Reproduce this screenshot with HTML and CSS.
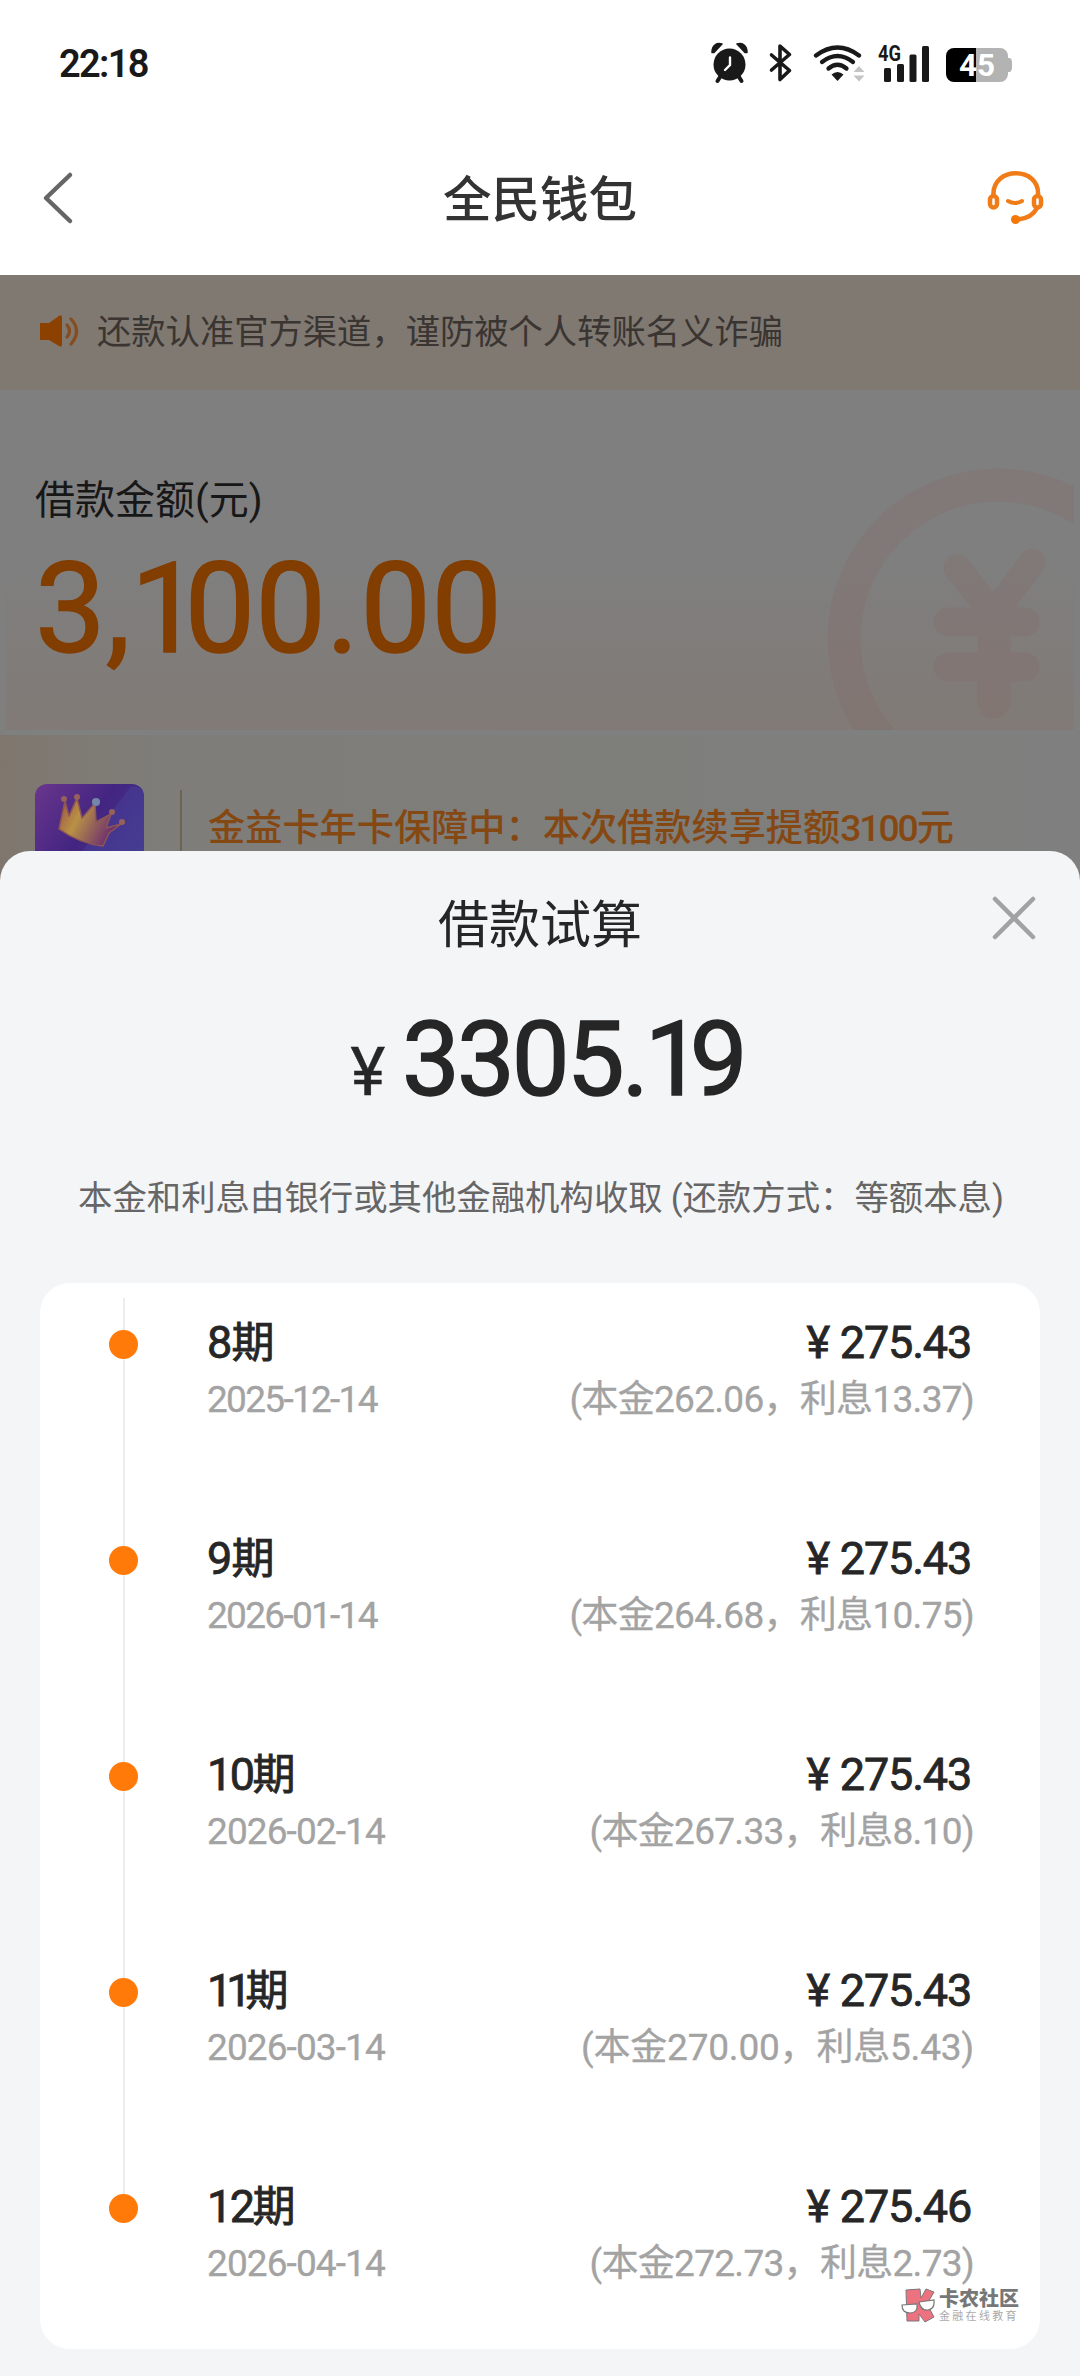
FILE: index.html
```html
<!DOCTYPE html>
<html lang="zh-CN">
<head>
<meta charset="utf-8">
<title>全民钱包</title>
<link rel="stylesheet" href="styles.css">
</head>
<body>
<div class="screen">
  <header class="status">
    <span class="clock">22:18</span>
    <svg class="status-icons" viewBox="0 0 310 44" width="310" height="44">
      <g fill="#191919">
        <circle cx="18.500" cy="24.500" r="16"/>
        <path d="M1 12.500C1 5 6 2.500 11 4L3 12.500ZM36 12.500C36 5 31 2.500 26 4L34 12.500Z" stroke="#191919" stroke-width="1.500" stroke-linejoin="round"/>
        <path d="M9 37l-2.500 4M28 37l2.500 4" stroke="#191919" stroke-width="4" stroke-linecap="round"/>
        <path d="M19 17.500v7.500l-5 5" fill="none" stroke="#fff" stroke-width="2.400" stroke-linecap="round"/>
      </g>
      <path d="M60.500 15l18 15.500-9.500 9V6l9.500 8.500-18 15.500" fill="none" stroke="#191919" stroke-width="3.600" stroke-linejoin="round" stroke-linecap="round"/>
      <g fill="none" stroke="#191919" stroke-width="4.300" stroke-linecap="round">
        <path d="M105 15.500q21.500-16 43 0"/><path d="M111 22q15.500-12 31 0"/><path d="M117.500 28.500q9-7.500 18 0"/>
      </g>
      <path d="M120.500 34.500q6-5 12 0l-6 6.500z" fill="#191919"/>
      <path d="M142.500 32l5.500-6 5.500 6zM142.500 35.500l5.500 6 5.500-6z" fill="#c4c4c4"/>
      <g fill="#191919"><rect x="173" y="28" width="7" height="14" rx="1.500"/><rect x="186" y="24" width="7" height="18" rx="1.500"/><rect x="198.500" y="14.500" width="7" height="27.500" rx="1.500"/><rect x="211" y="6" width="7" height="36" rx="1.500"/></g>
      <text x="167" y="21" class="net" textLength="23" lengthAdjust="spacingAndGlyphs">4G</text>
      <path d="M265 8h24a8 8 0 0 1 8 8v2h2q2 1 2 5v4q0 4-2 5h-2v2a8 8 0 0 1-8 8h-24z" fill="#b3b3b3"/>
      <path d="M265 8h-22a8 8 0 0 0-8 8v18a8 8 0 0 0 8 8h22z"/>
      <text x="248" y="36" class="batt" textLength="36" lengthAdjust="spacingAndGlyphs">45</text>
    </svg>
  </header>
  <nav class="nav">
    <svg width="32" height="54" viewBox="0 0 32 54"><path d="M28 4L4 27l24 23" fill="none" stroke="#666" stroke-width="4.500" stroke-linecap="round" stroke-linejoin="round"/></svg>
    <h1>全民钱包</h1>
    <svg width="58" height="56" viewBox="0 0 58 56"><g fill="none" stroke="#f07c18" stroke-width="4.500" stroke-linecap="round"><path d="M7.500 25C6 -4 54-4 52 25"/><rect x="4" y="26" width="7" height="11.500" rx="3.500"/><rect x="48" y="26" width="7" height="11.500" rx="3.500"/><path d="M51 38q-5 10-19 11.500"/><path d="M22 31q7 4 14 0" stroke-width="4"/></g><circle cx="29.500" cy="49.500" r="4.500" fill="#f47708"/></svg>
  </nav>

  <main class="page">
    <div class="notice">
      <svg width="40" height="34" viewBox="0 0 40 34"><path d="M2 9h8L20 2q3-2 3 2v26q0 4-3 2L10 26H2q-1 0-1-1V10q0-1 1-1z" fill="#8d4100"/><g fill="none" stroke="#864c1e" stroke-width="3.200" stroke-linecap="round"><path d="M28 11q5 6 0 12"/><path d="M32 5q11 12 0 25"/></g></svg>
      <span>还款认准官方渠道，谨防被个人转账名义诈骗</span>
    </div>
    <section class="loan">
      <svg class="coin" width="254" height="264" viewBox="0 0 254 264"><g fill="none" stroke="#846a67" stroke-linecap="round"><circle cx="178" cy="173" r="154" stroke-width="33"/><path d="M137 102l37 46 38-52" stroke-width="27"/><path d="M128 156h77M128 201h77" stroke-width="29"/><path d="M174 156v80" stroke-width="33"/></g></svg>
      <h2>借款金额(元)</h2>
      <div class="sum">3,<i class="one">1</i>00<i class="pt">.</i>00</div>
    </section>
    <section class="member">
      <svg width="110" height="90" viewBox="0 0 110 90"><defs><linearGradient id="tile" x2="1" y2=".7"><stop stop-color="#6a368c"/><stop offset=".5" stop-color="#432581"/><stop offset="1" stop-color="#403a89"/></linearGradient><linearGradient id="gold" x2="1" y2=".4"><stop stop-color="#9a4f45"/><stop offset=".4" stop-color="#b99145"/><stop offset="1" stop-color="#6a2b70"/></linearGradient></defs><rect width="109" height="110" rx="12" fill="url(#tile)"/><path d="M30 90L96 2q13 0 13 12v76z" fill="#4c45a0" opacity=".4"/><path d="M24 45L30 17l4 15 8-18 5 20 13-15 1 19 15-8-5 14 15-4-12 9-6 13Q45 60 24 45z" fill="url(#gold)" stroke="#8c5556" stroke-width="1.500" stroke-linejoin="round"/><g fill="#96605b"><circle cx="29" cy="15" r="3"/><circle cx="42" cy="13" r="3"/><circle cx="61" cy="18" r="4" fill="#7587a8"/><circle cx="77" cy="28" r="3"/><circle cx="87" cy="38" r="3"/></g></svg>
      <span class="rule"></span>
      <p>金益卡年卡保障中：本次借款续享提额<b>3100</b>元</p>
    </section>
  </main>

  <section class="sheet">
    <div class="sheet-head"><h2>借款试算</h2>
      <svg class="close" width="44" height="44" viewBox="0 0 44 44"><path d="M3 3l38 38M41 3L3 41" stroke="#a1a2a3" stroke-width="4.500" stroke-linecap="round"/></svg>
    </div>
    <div class="total"><small>¥</small><span>3305<i class="pt">.</i><i class="one">1</i>9</span></div>
    <p class="desc">本金和利息由银行或其他金融机构收取<span class="open">(</span>还款方式：等额本息)</p>
    <ol class="plan">
      <li><i class="dot"></i><div class="term"><h3>8<em>期</em></h3><time class="narrow">2025-12-14</time></div><div class="pay"><strong>¥ 275.43</strong><span>(本金262.06，利息13.37)</span></div></li>
      <li><i class="dot"></i><div class="term"><h3>9<em>期</em></h3><time class="narrow">2026-01-14</time></div><div class="pay"><strong>¥ 275.43</strong><span>(本金264.68，利息10.75)</span></div></li>
      <li><i class="dot"></i><div class="term"><h3 class="snug">10<em>期</em></h3><time>2026-02-14</time></div><div class="pay"><strong>¥ 275.43</strong><span>(本金267.33，利息8.10)</span></div></li>
      <li><i class="dot"></i><div class="term"><h3 class="tight">11<em>期</em></h3><time>2026-03-14</time></div><div class="pay"><strong>¥ 275.43</strong><span class="wide">(本金270.00，利息5.43)</span></div></li>
      <li><i class="dot"></i><div class="term"><h3 class="snug">12<em>期</em></h3><time>2026-04-14</time></div><div class="pay"><strong>¥ 275.46</strong><span>(本金272.73，利息2.73)</span></div></li>
    </ol>
  </section>

  <div class="mark">
    <svg width="34" height="36" viewBox="0 0 34 36"><path d="M5 2l14-1 1 9 5-9 8 3-7 12 7 13-9 5-6-8v7H6z" fill="#ed7280" stroke="#7d7779"/><g fill="#fff" stroke="#777" stroke-width="1.200"><path d="M1 17l15-1q1 9-7 9T1 17zM18 14l15-2q1 9-6 10t-9-8z"/></g></svg>
    <div><b>卡农社区</b><span>金融在线教育</span></div>
  </div>
</div>
</body>
</html>
```
FILE: styles.css
```css
* { box-sizing: border-box; margin: 0; padding: 0; }
body { background: #fff; font-family: Roboto, "Noto Sans CJK SC", sans-serif; color: #262626; }
i, em { font-style: normal; }
svg { display: block; flex: none; }
h1, h2, h3 { font-weight: 400; }

.screen { position: relative; width: 1080px; height: 2376px; overflow: hidden; display: flex; flex-direction: column; }

.status { height: 120px; padding: 40px 59px 0; display: flex; justify-content: space-between; }
.clock { font-size: 38px; line-height: 48px; font-weight: 600; color: #191919; letter-spacing: -1.700px; }
.net { font: 700 22px Roboto, sans-serif; fill: #191919; }
.batt { font: 700 31px Roboto, sans-serif; fill: #fff; }

.nav { height: 155px; padding: 1px 36px 0 42px; display: flex; align-items: center; justify-content: space-between; }
.nav h1 { font-size: 48.500px; line-height: 60px; font-weight: 500; color: #333; padding: 5px 0 0 20px; }

.page { height: 606px; flex: none; background: #7f7f7f; }
.notice { height: 115px; background: #7f7972; padding: 0 0 4px 39px; display: flex; align-items: center; gap: 18px; font-size: 34.300px; color: #3b3532; }
.notice span { padding-bottom: 4px; }
.loan { position: relative; height: 345px; margin: 0 6px; padding: 86px 0 0 29px; background: linear-gradient(#7f7f7f 50%, #817a76); border-bottom: 5px solid #7f8080; overflow: hidden; }
.loan h2 { font-size: 40px; line-height: 50px; color: #171717; }
.coin { position: absolute; right: 0; top: 76px; opacity: .28; }
.sum { font-size: 126px; line-height: 126px; color: #823d00; -webkit-text-stroke: 1.500px #823d00; margin-top: 20px; }
.sum .one { letter-spacing: -17px; }
.sum .pt { letter-spacing: 1px; }
.member { height: 146px; padding: 49px 0 0 35px; display: flex; align-items: flex-start; background: linear-gradient(90deg, #7f776e, #7e7d79 15%, #7e7e7b 60%, #7f7f7f); }
.rule { width: 2px; height: 80px; margin: 6px 26px 0 35px; background: #6e6254; }
.member p { font-size: 37.200px; line-height: 48px; margin-top: 20px; color: #864813; font-weight: 500; white-space: nowrap; }
.member b { font-weight: 500; letter-spacing: -2px; }

.sheet { position: relative; flex: 1; margin-top: -30px; background: #f4f5f7; border-radius: 30px 30px 0 0; padding: 0 40px; }
.sheet-head { position: relative; height: 145px; text-align: center; }
.sheet-head h2 { font-size: 51px; line-height: 150px; height: 145px; }
.close { position: absolute; right: 4px; top: 45px; }
.total { height: 126px; display: flex; justify-content: center; align-items: baseline; gap: 20px; padding-left: 15px; font-size: 103px; line-height: 128px; letter-spacing: -3px; -webkit-text-stroke: 1.500px #262626; }
.total small { font-size: 66px; -webkit-text-stroke-width: .5px; }
.total .one { letter-spacing: -13px; }
.total .pt { letter-spacing: -4px; }
.desc { margin-top: 51px; height: 50px; line-height: 50px; font-size: 34.400px; color: #666; text-align: center; white-space: nowrap; padding-left: 2px; }
.desc .open { margin-left: 8px; }
.plan { list-style: none; margin-top: 60px; height: 1066px; padding: 15px 66px 0 69px; background: #fff; border-radius: 30px; }
.plan li { height: 216px; display: flex; padding-top: 15px; background: linear-gradient(#ececec, #ececec) 14px 0 / 2px 100% no-repeat; }
.plan li:last-child { background-size: 2px 40px; }
.dot { width: 29px; height: 29px; margin-top: 17px; border-radius: 50%; background: #ff7a08; }
.term { margin-left: 69px; flex: 1; }
.term h3, .pay strong { display: block; font-size: 45px; line-height: 60px; font-weight: 400; letter-spacing: -.8px; -webkit-text-stroke: .8px #262626; }
.term h3.snug { letter-spacing: -2.500px; }
.term h3.tight { letter-spacing: -6px; }
.term h3 em { font-size: 43px; }
.pay strong { letter-spacing: -1.200px; word-spacing: 1px; margin-right: 3px; padding-left: 3px; }
.term time, .pay span { display: block; font-size: 37px; line-height: 54px; letter-spacing: -.7px; color: #a3a3a3; -webkit-text-stroke: .3px #a3a3a3; }
.pay .wide { letter-spacing: -.2px; }
.term time { letter-spacing: -.9px; }
.term time.narrow { letter-spacing: -1.700px; }
.pay { text-align: right; }

.mark { position: absolute; left: 901px; top: 2288px; display: flex; gap: 4px; color: #777; }
.mark b { display: block; font-size: 20px; line-height: 22px; font-weight: 900; }
.mark span { display: block; font-size: 11px; line-height: 13px; letter-spacing: 2.300px; color: #aaa; }
```
